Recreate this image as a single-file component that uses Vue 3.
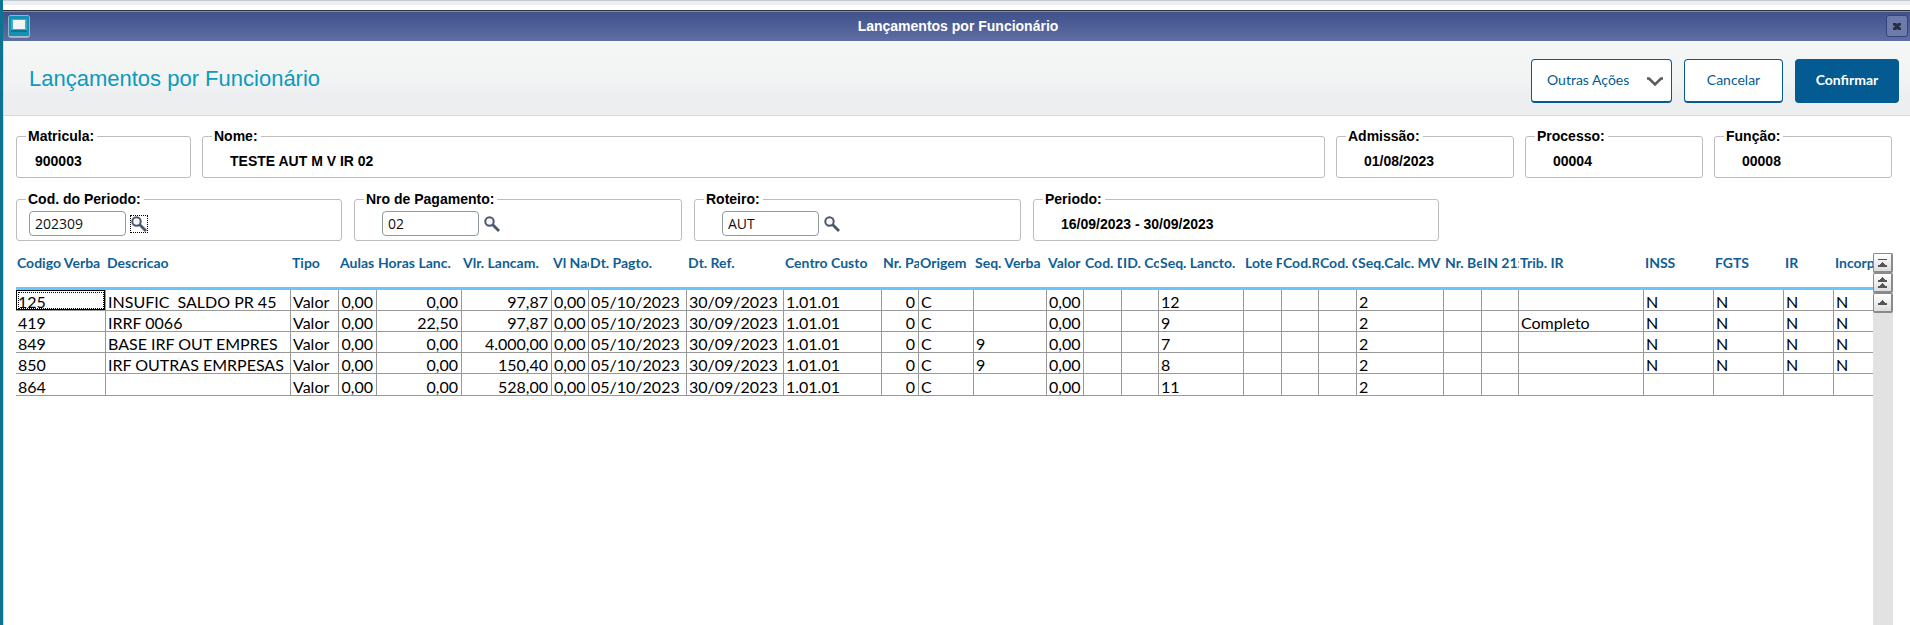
<script setup>
import { ref } from 'vue'

const title = 'Lançamentos por Funcionário'

const infoFields = [
  { id: 'matricula', label: 'Matricula:', value: '900003' },
  { id: 'nome', label: 'Nome:', value: 'TESTE AUT M V IR 02' },
  { id: 'admissao', label: 'Admissão:', value: '01/08/2023' },
  { id: 'processo', label: 'Processo:', value: '00004' },
  { id: 'funcao', label: 'Função:', value: '00008' },
]

const lookups = ref([
  { id: 'periodo', label: 'Cod. do Periodo:', value: '202309' },
  { id: 'pagamento', label: 'Nro de Pagamento:', value: '02' },
  { id: 'roteiro', label: 'Roteiro:', value: 'AUT' },
])

const columns = [
  { label: 'Codigo Verba', w: 90 },
  { label: 'Descricao', w: 185 },
  { label: 'Tipo', w: 48 },
  { label: 'Aulas', w: 38, num: true },
  { label: 'Horas Lanc.', w: 85, num: true },
  { label: 'Vlr. Lancam.', w: 90, num: true },
  { label: 'Vl Nac', w: 37, num: true },
  { label: 'Dt. Pagto.', w: 98 },
  { label: 'Dt. Ref.', w: 97 },
  { label: 'Centro Custo', w: 98 },
  { label: 'Nr. Pa', w: 37, num: true },
  { label: 'Origem', w: 55 },
  { label: 'Seq. Verba', w: 73 },
  { label: 'Valor', w: 37, num: true },
  { label: 'Cod. D', w: 38 },
  { label: 'ID. Co', w: 37 },
  { label: 'Seq. Lancto.', w: 85 },
  { label: 'Lote F', w: 38 },
  { label: 'Cod.R', w: 37 },
  { label: 'Cod. C', w: 38 },
  { label: 'Seq.Calc. MV', w: 87 },
  { label: 'Nr. Be', w: 38 },
  { label: 'IN 21:', w: 37 },
  { label: 'Trib. IR', w: 125 },
  { label: 'INSS', w: 70 },
  { label: 'FGTS', w: 70 },
  { label: 'IR', w: 50 },
  { label: 'Incorp', w: 90 },
]

const entry = (code, desc, hours, amount, verba, seq, trib, flag) => [
  code, desc, 'Valor', '0,00', hours, amount, '0,00', '05/10/2023', '30/09/2023', '1.01.01',
  '0', 'C', verba, '0,00', '', '', seq, '', '', '', '2', '', '', trib, flag, flag, flag, flag,
]

const rows = [
  entry('125', 'INSUFIC  SALDO PR 45', '0,00', '97,87', '', '12', '', 'N'),
  entry('419', 'IRRF 0066', '22,50', '97,87', '', '9', 'Completo', 'N'),
  entry('849', 'BASE IRF OUT EMPRES', '0,00', '4.000,00', '9', '7', '', 'N'),
  entry('850', 'IRF OUTRAS EMRPESAS', '0,00', '150,40', '9', '8', '', 'N'),
  entry('864', '', '0,00', '528,00', '', '11', '', ''),
]
</script>

<template>
  <div class="window">
    <div class="strip"></div>
    <header class="titlebar">
      <svg class="app-icon" width="22" height="23" viewBox="0 0 22 23" aria-hidden="true">
        <rect x="0.5" y="0.5" width="21" height="22" rx="2" fill="#a9bccb" stroke="#8fb6cb" />
        <rect x="1" y="1" width="20" height="20" rx="1" fill="#1591b3" />
        <path d="M3 4h16v13H3z" fill="#3fabc6" />
        <rect x="5" y="5" width="12" height="9" fill="#f3f4f4" />
        <path d="M3 15h16v2H3z" fill="#087693" />
      </svg>
      <span class="caption">{{ title }}</span>
      <button class="close" aria-label="Fechar">
        <svg width="8" height="7" viewBox="0 0 8 7"><path d="M0 0h3l1 1 1-1h3v2L6 3.5 8 5v2H5L4 6 3 7H0V5l2-1.5L0 2z" fill="#2a2e45" /></svg>
      </button>
    </header>

    <section class="toolbar">
      <h1>{{ title }}</h1>
      <div class="actions">
        <button class="btn more">
          Outras Ações
          <svg width="18" height="11" viewBox="0 0 18 11"><path d="M1 1.5h2l6 6 6-6h2" fill="none" stroke="#5c5c5c" stroke-width="2.6" /></svg>
        </button>
        <button class="btn">Cancelar</button>
        <button class="btn primary">Confirmar</button>
      </div>
    </section>

    <main>
      <div class="row info">
        <fieldset v-for="f in infoFields" :key="f.id" :class="f.id">
          <legend>{{ f.label }}</legend>
          <output>{{ f.value }}</output>
        </fieldset>
      </div>

      <div class="row filters">
        <fieldset v-for="f in lookups" :key="f.id" :class="f.id">
          <legend><label :for="f.id">{{ f.label }}</label></legend>
          <div class="lookup">
            <input :id="f.id" v-model="f.value" type="text" />
            <button class="search" :class="{ focused: f.id === 'periodo' }" :aria-label="'Pesquisar ' + f.label">
              <svg width="16" height="16" viewBox="0 0 16 16">
                <circle cx="5.5" cy="5.5" r="4.2" fill="#f4f6fa" stroke="#4b576c" stroke-width="2" />
                <path d="M8.5 8.5l6.5 6.5" stroke="#4b576c" stroke-width="2.8" />
              </svg>
            </button>
          </div>
        </fieldset>
        <fieldset class="range">
          <legend>Periodo:</legend>
          <output>16/09/2023 - 30/09/2023</output>
        </fieldset>
      </div>

      <div class="grid">
        <div class="viewport">
          <table>
            <colgroup>
              <col v-for="c in columns" :key="c.label" :style="{ width: c.w + 'px' }" />
            </colgroup>
            <thead>
              <tr><th v-for="c in columns" :key="c.label" scope="col">{{ c.label }}</th></tr>
            </thead>
            <tbody>
              <tr v-for="(r, i) in rows" :key="i">
                <td v-for="(v, j) in r" :key="j" :class="{ num: columns[j].num, current: i === 0 && j === 0 }">{{ v }}</td>
              </tr>
            </tbody>
          </table>
        </div>
        <div class="scroller">
          <button aria-label="Primeiro registro">
            <svg width="9" height="8" viewBox="0 0 9 8"><path d="M0 0h9v1H0zM4 3h1v1h1v1h1v1h2v2H0V6h2V5h1V4h1z" fill="#555" /></svg>
          </button>
          <button aria-label="Página anterior">
            <svg width="9" height="11" viewBox="0 0 9 11"><path d="M4 0h1v1h1v1h1v1h2v2H0V3h2V2h1V1h1zM4 6h1v1h1v1h1v1h2v2H0V9h2V8h1V7h1z" fill="#555" /></svg>
          </button>
          <button aria-label="Registro anterior">
            <svg width="9" height="5" viewBox="0 0 9 5"><path d="M4 0h1v1h1v1h1v1h2v2H0V3h2V2h1V1h1z" fill="#555" /></svg>
          </button>
        </div>
      </div>
    </main>
  </div>
</template>

<style>
body {
  margin: 0;
  background: #fff;
}
</style>

<style scoped>
* {
  box-sizing: border-box;
}
.window {
  min-height: 100vh;
  display: flex;
  flex-direction: column;
  border-left: 3px solid #0c7490;
  background: #fff;
  color: #000;
  font: 14px/16px "Liberation Sans", Arial, sans-serif;
}
button {
  font: inherit;
  padding: 0;
  display: flex;
  align-items: center;
  justify-content: center;
}
svg {
  display: block;
}
.strip {
  height: 10px;
  border-top: 1px solid #c3c9d0;
  background: linear-gradient(#eceef0 4px, #fff 4px);
}
.titlebar {
  display: flex;
  align-items: center;
  justify-content: space-between;
  height: 31px;
  padding: 0 2px 0 5px;
  border-top: 1px solid #33343a;
  background: linear-gradient(#3e4f8a, #5f6fa3);
  box-shadow: inset 0 1px #8089b0;
}
.caption {
  color: #fff;
  font-weight: bold;
}
.close {
  width: 22px;
  height: 22px;
  border: 1px solid #34437c;
  border-radius: 3px;
  background: #6d7bab;
}
.toolbar {
  display: flex;
  align-items: center;
  justify-content: space-between;
  height: 75px;
  padding: 0 11px 0 25px;
  border-bottom: 1px solid #d5d7da;
  border-left: 1px solid #c4dfe8;
  background: linear-gradient(#f5f7f6, #f2f4f4 50%, #eceef0 75%);
}
h1 {
  margin: 0;
  padding-top: 2px;
  color: #0c9abe;
  font-size: 22px;
  font-weight: normal;
  line-height: 28px;
}
.actions {
  display: flex;
  gap: 12px;
  padding-top: 6px;
}
.btn {
  height: 44px;
  min-width: 99px;
  padding-bottom: 1px;
  border: 1px solid #045b92;
  border-bottom-width: 2px;
  border-radius: 4px;
  background: #fff;
  color: #045b92;
  font: 14px/20px Lato, sans-serif;
}
.more {
  width: 141px;
  justify-content: space-between;
  padding: 0 7px 1px 15px;
}
.more svg {
  margin-top: 5px;
}
.primary {
  min-width: 104px;
  background: #045b92;
  color: #fff;
  font-weight: bold;
}
main {
  flex: 1;
  display: flex;
  flex-direction: column;
  padding: 12px 17px 0 12px;
  border-left: 1px solid #c4dfe8;
}
.row {
  display: grid;
  font-weight: bold;
}
.info {
  grid-template-columns: 175px 1fr 178px 178px 178px;
  column-gap: 11px;
  padding-right: 1px;
}
.filters {
  grid-template-columns: 326px 328px 327px 406px;
  column-gap: 12px;
  margin-top: 13px;
}
fieldset {
  min-width: 0;
  height: 50px;
  margin: 0;
  padding: 0 9px;
  border: 1px solid #bdbdbd;
  border-radius: 3px;
}
legend {
  padding: 0 3px 0 2px;
}
output {
  display: block;
  padding: 9px 0 0 18px;
}
.matricula output {
  padding-left: 9px;
}
.lookup {
  display: flex;
  align-items: center;
  gap: 4px;
  padding: 4px 0 0 18px;
}
.periodo .lookup {
  padding-left: 3px;
}
input {
  width: 97px;
  height: 25px;
  padding: 0 5px;
  border: 1px solid #8f9a9c;
  border-radius: 4px;
  background: #fff;
  color: #111;
  font: 14px/20px "Open Sans", sans-serif;
}
.search {
  width: 18px;
  height: 18px;
  border: 1px dotted transparent;
  background: none;
}
.search.focused {
  border-color: #000;
}
.grid {
  flex: 1;
  display: flex;
  margin-top: 12px;
}
.viewport {
  flex: 1;
  min-width: 0;
  overflow: hidden;
}
table {
  width: 0;
  table-layout: fixed;
  border-collapse: separate;
  border-spacing: 0;
  font: 16px/16px Lato, sans-serif;
}
th,
td {
  padding: 4px 0 0 2px;
  overflow: hidden;
  white-space: pre;
  text-align: left;
}
th {
  height: 37px;
  padding: 0 0 14px 1px;
  border-bottom: 3px solid #6cc5fa;
  color: #0f5f96;
  font-size: 14px;
  font-weight: bold;
}
td {
  height: 21px;
  border-right: 1px solid #999;
  border-bottom: 1px solid #999;
}
tr:last-child td {
  height: 22px;
}
td.num {
  padding-right: 3px;
  text-align: right;
}
td.current {
  outline: 1px dotted #000;
  outline-offset: -3px;
  box-shadow: inset 0 0 0 1px #000;
}
.scroller {
  width: 20px;
  background: #e2e2e2;
}
.scroller button {
  width: 20px;
  height: 20px;
  border: 1px solid #8a8a8a;
  border-right-width: 2px;
  border-bottom-width: 2px;
  border-radius: 2px;
  background: linear-gradient(#fff, #ddd);
}
</style>
